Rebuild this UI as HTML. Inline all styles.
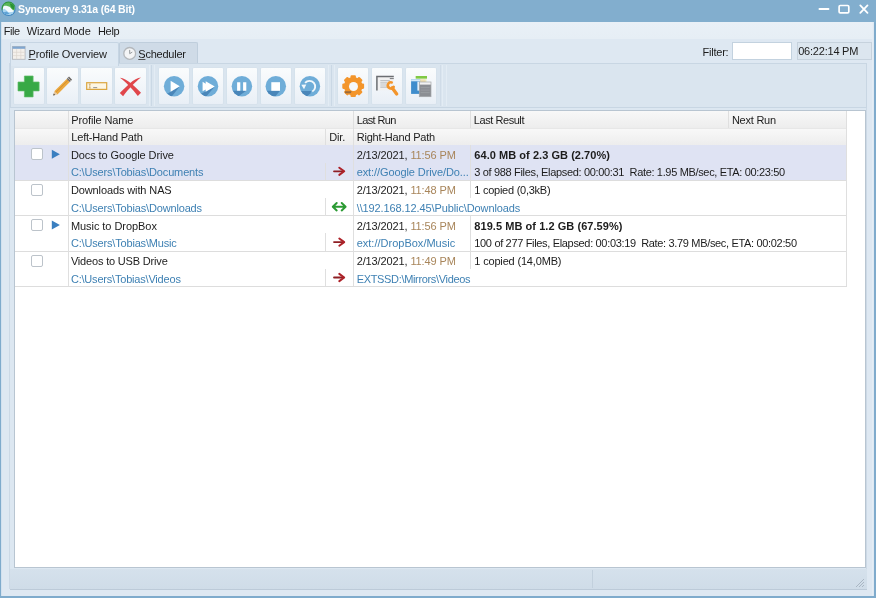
<!DOCTYPE html>
<html><head><meta charset="utf-8"><title>Syncovery 9.31a (64 Bit)</title>
<style>
*{box-sizing:border-box;margin:0;padding:0}
html,body{width:876px;height:598px;overflow:hidden}
body{position:relative;background:#7fabcc;font-family:"Liberation Sans",sans-serif;font-size:11px;color:#1c1c1c}
.abs{position:absolute}
.tx{position:absolute;white-space:pre;line-height:14px;height:14px}
.tx u{text-decoration:underline;text-decoration-thickness:0.9px;text-underline-offset:1.2px;text-decoration-color:#555}
#title{left:0;top:0;width:876px;height:23px;background:#82aece}
#client{left:1.3px;top:21.6px;width:872.3px;height:574px;background:#dee8f2}
#menu{left:1.3px;top:21.7px;width:872.2px;height:17px;background:linear-gradient(#e9f0f7,#e6eef5)}
#tab1{left:9.5px;top:41.7px;width:109.5px;height:24px;background:#dde8f2;border:1px solid #c6d5e3;border-bottom:none;border-radius:2px 2px 0 0}
#tab2{left:119px;top:42.2px;width:78.6px;height:21.5px;background:#cfdbe7;border:1px solid #bfcedc;border-bottom:none;border-radius:2px 2px 0 0}
#page{left:9px;top:63px;width:858px;height:526px;background:#dce7f1;border:1px solid #ccd9e6}
#toolbar{left:10px;top:63.2px;width:856.5px;height:44.4px;background:#dae5ef;border:1px solid #c8d6e3}
.btn{position:absolute;top:67.6px;width:30.5px;height:36.5px;background:linear-gradient(#fafcfd,#e9eff6);box-shadow:0 0 0 0.6px #d3dfea;border-radius:1px}
.btn svg{position:absolute;left:0;top:1px}
#grid{left:13.6px;top:110px;width:852px;height:458px;background:#fff;border:1px solid #b8c5d1}
.hdr{position:absolute;left:14.5px;width:832px;background:linear-gradient(#f8f8f8,#ededed)}
.vl{position:absolute;width:1px;background:#dfdfdf}
.hl{position:absolute;height:1px;background:#dddddd;left:14.5px;width:832px}
.cb{position:absolute;width:12px;height:12px;border:1px solid #bcc3ca;border-radius:2px;background:#fff}
#status{left:9.5px;top:568.6px;width:857px;height:21px;background:linear-gradient(#d5e1ec,#cfdce8);border-bottom:1px solid #bccad8}
#w{position:absolute;left:0;top:0;width:876px;height:598px;will-change:transform;overflow:hidden}
</style></head><body><div id="w">
<div id="title" class="abs">
<svg class="abs" style="left:0px;top:0px" width="17" height="17" viewBox="-0.6 -0.8 17 17"><defs><linearGradient id="ig" x1="0" y1="0" x2="0.3" y2="1"><stop offset="0" stop-color="#2c9436"/><stop offset="0.5" stop-color="#2f9550"/><stop offset="0.62" stop-color="#4a90c4"/><stop offset="1" stop-color="#3f86bf"/></linearGradient><clipPath id="ic"><circle cx="8" cy="8" r="6.2"/></clipPath></defs><circle cx="8" cy="8" r="6.5" fill="#f4fafd" stroke="url(#ig)" stroke-width="1.4"/><g clip-path="url(#ic)"><path d="M3.5 0H16V8.5L12.6 9.7 9 6 5.8 4.9 2.5 5z" fill="#5ab657"/><path d="M9 2.5L14 4 13.5 9 11 7.5z" fill="#2b9434"/><path d="M0 9.5L4 8 8 11.5 13 11 16 9V16H0z" fill="#a9d5f1"/><path d="M2 12L6 10.8 9 13 5 14.5z" fill="#5fa3d6"/></g></svg>
<svg class="abs" style="left:816px;top:2px" width="57" height="15" viewBox="0 0 57 15"><g stroke="#fff" fill="none" stroke-linecap="round"><path d="M3.4 7h9.1" stroke-width="1.8"/><rect x="23.1" y="3.5" width="9.7" height="7.4" rx="1.2" stroke-width="1.7"/><path d="M44.3 3.4l7.2 7.4M51.5 3.4l-7.2 7.4" stroke-width="1.8"/></g></svg>
</div>
<div id="client" class="abs"></div>
<div id="menu" class="abs"></div>
<div id="tab2" class="abs"></div>
<div id="page" class="abs"></div>
<div id="toolbar" class="abs"></div>
<div id="tab1" class="abs"></div>
<!-- tab icons -->
<svg class="abs" style="left:12px;top:46px" width="15" height="15" viewBox="0 0 15 15"><rect x="0.5" y="0.5" width="12.6" height="12.8" fill="#f4f0eb" stroke="#b4b8bd" stroke-width="0.9"/><rect x="0.5" y="0.5" width="12.6" height="2.3" fill="#7fa6d0"/><path d="M0.8 6.3h12M0.8 9.6h12M4.6 3.2v10M8.8 3.2v10" stroke="#ddd6ce" stroke-width="0.7"/></svg>
<svg class="abs" style="left:123px;top:46px" width="15" height="15" viewBox="0 -0.7 15 15"><circle cx="6.7" cy="6.7" r="5.9" fill="#f4f5f6" stroke="#b3b7bb" stroke-width="1.3"/><path d="M6.7 3.2v3.8l2.6-1.6" stroke="#8a8e92" stroke-width="0.9" fill="none"/></svg>
<!-- filter + time -->
<div class="abs" style="left:731.5px;top:42.2px;width:60.3px;height:17.8px;background:#fff;border:1px solid #c3d2df"></div>
<div class="abs" style="left:796.8px;top:42.2px;width:75px;height:18.1px;background:#dce6ef;border:1px solid #c6d2dd"></div>
<!-- toolbar separators -->
<div class="abs" style="left:148.5px;top:65px;width:1px;height:41px;background:#e3ecf4"></div><div class="abs" style="left:151px;top:65px;width:1px;height:41px;background:#cad8e5"></div><div class="abs" style="left:153.6px;top:65px;width:1px;height:41px;background:#e3ecf4"></div>
<div class="abs" style="left:327.5px;top:65px;width:1px;height:41px;background:#e3ecf4"></div><div class="abs" style="left:331.2px;top:65px;width:1px;height:41px;background:#cad8e5"></div><div class="abs" style="left:333.8px;top:65px;width:1px;height:41px;background:#e3ecf4"></div><div class="abs" style="left:439.6px;top:65px;width:1px;height:41px;background:#d0dce8"></div><div class="abs" style="left:442px;top:65px;width:1px;height:41px;background:#e3ecf4"></div><div class="abs" style="left:445.7px;top:65px;width:1px;height:41px;background:#e3ecf4"></div>
<!-- buttons -->
<div class="btn" style="left:13.7px"><svg style="left:-0.7px;top:0.4px" width="32" height="38" viewBox="-0.7 -0.6 32 38"><path d="M10.7 7.4h8.7v6h6v8.9h-6v6h-8.7v-6H4.3v-8.9h6.4z" fill="#38a946" stroke="#5cbb66" stroke-width="0.7" stroke-linejoin="round"/></svg></div>
<div class="btn" style="left:47.3px"><svg style="left:-0.3px;top:0.4px" width="32" height="38" viewBox="-0.3 -0.6 32 38"><path d="M7 22.7L19.4 10.3 22.5 13.4 10.1 25.8z" fill="#eba83f"/><path d="M8.3 24L20.9 11.4" stroke="#d08c2a" stroke-width="0.9"/><path d="M19.4 10.3L21.7 8 24.8 11.1 22.5 13.4z" fill="#6d6a68"/><path d="M20.5 9.2L23.6 12.3" stroke="#bdb7b0" stroke-width="0.9"/><path d="M5.9 26.9L7 22.7 10.1 25.8z" fill="#e7c9a0"/><path d="M5.9 26.9L6.5 25 7.8 26.3z" fill="#3c3c3c"/></svg></div>
<div class="btn" style="left:81.3px"><svg style="left:-0.3px;top:0.4px" width="32" height="38" viewBox="-0.3 -0.6 32 38"><rect x="5.4" y="14.1" width="20" height="6.7" fill="#fdf6e3" stroke="#dba640" stroke-width="1.2"/><path d="M7.5 15.5h2M8.5 15.5v3.9M7.5 19.4h2" stroke="#c29a55" stroke-width="0.7" fill="none"/><path d="M11.9 19h4" stroke="#8a8a8a" stroke-width="0.9"/></svg></div>
<div class="btn" style="left:115.2px"><svg style="left:-0.2px;top:0.4px" width="32" height="38" viewBox="-0.2 -0.6 32 38"><path d="M4.7 9.2C8 9.3 12 11.5 16 15C20 18.5 23.5 22 25.8 24.2L22.6 27.5C20 24 17 20.5 13.5 17C10 13.5 7.5 11 4.7 9.2z" fill="#e0464b"/><path d="M25.8 9C22.5 9.2 18.5 11.5 14.5 15C10.5 18.5 7 22.2 4.6 24.5L7.9 27.7C10.5 24 13.5 20.5 17 17C20.5 13.5 23 11 25.8 9z" fill="#e0464b"/></svg></div>
<!-- blue group -->
<div class="btn" style="left:158.8px"><svg style="left:-0.8px;top:0.4px" width="32" height="38" viewBox="-0.8 -0.6 32 38"><defs><clipPath id="cc"><circle cx="15.3" cy="17.7" r="10.25"/></clipPath></defs><circle cx="15.3" cy="17.7" r="10.25" fill="#6fadd8"/><path clip-path="url(#cc)" d="M21 17.6L11.8 23.2 5 27.3 9 32 13 28z" fill="#4a86b9"/><path d="M11.8 12.2L21 17.6 11.8 23.2z" fill="#fff"/></svg></div>
<div class="btn" style="left:192.7px"><svg style="left:-0.7px;top:0.4px" width="32" height="38" viewBox="-0.7 -0.6 32 38"><circle cx="15.3" cy="17.7" r="10.25" fill="#6fadd8"/><path clip-path="url(#cc)" d="M22.1 17.9L9.9 24.3 5 27 9 32 14 27.5z" fill="#4a86b9"/><path d="M9.9 13.1L13 15.1V12.7L22.1 17.9 13 23.2V20.8L9.9 22.7z" fill="#fff"/></svg></div>
<div class="btn" style="left:226.6px"><svg style="left:-0.6px;top:0.4px" width="32" height="38" viewBox="-0.6 -0.6 32 38"><circle cx="15.3" cy="17.7" r="10.25" fill="#6fadd8"/><path clip-path="url(#cc)" d="M4 22.2H19.7L12.2 27.5 8 30H4z" fill="#4a86b9"/><path d="M10.5 13.6h3.2v8.6h-3.2zM16.5 13.6h3.2v8.6h-3.2z" fill="#fff"/></svg></div>
<div class="btn" style="left:260.6px"><svg style="left:-0.6px;top:0.4px" width="32" height="38" viewBox="-0.6 -0.6 32 38"><circle cx="15.2" cy="17.7" r="10.25" fill="#6fadd8"/><path clip-path="url(#cc)" d="M4 22.2H19.4L15.1 27.5 8 30H4z" fill="#4a86b9"/><rect x="10.7" y="13.6" width="8.7" height="8.6" fill="#fff"/></svg></div>
<div class="btn" style="left:294.7px"><svg style="left:-0.7px;top:0.4px" width="32" height="38" viewBox="-0.7 -0.6 32 38"><circle cx="15.2" cy="17.7" r="10.25" fill="#6fadd8"/><path clip-path="url(#cc)" d="M4 22.5H16.5L15.8 24.6 10 30H4z" fill="#4a86b9"/><path d="M10.4 14.3A5.7 5.7 0 1 1 17.6 22.9" fill="none" stroke="#f2f8fc" stroke-width="1.9"/><path d="M6.6 16.2L11.6 16 9.3 20.6z" fill="#f2f8fc"/></svg></div>
<!-- orange group -->
<div class="btn" style="left:337.8px"><svg style="left:-0.8px;top:0.4px" width="32" height="38" viewBox="-0.8 -0.6 32 38"><g transform="translate(15.4,17.6)"><g fill="#f3952b"><circle r="9.2"/><rect x="-2.7" y="-10.9" width="5.4" height="4" rx="1.1" transform="rotate(0)"/><rect x="-2.7" y="-10.9" width="5.4" height="4" rx="1.1" transform="rotate(45)"/><rect x="-2.7" y="-10.9" width="5.4" height="4" rx="1.1" transform="rotate(90)"/><rect x="-2.7" y="-10.9" width="5.4" height="4" rx="1.1" transform="rotate(135)"/><rect x="-2.7" y="-10.9" width="5.4" height="4" rx="1.1" transform="rotate(180)"/><rect x="-2.7" y="-10.9" width="5.4" height="4" rx="1.1" transform="rotate(225)"/><rect x="-2.7" y="-10.9" width="5.4" height="4" rx="1.1" transform="rotate(270)"/><rect x="-2.7" y="-10.9" width="5.4" height="4" rx="1.1" transform="rotate(315)"/></g><circle cx="0.3" cy="0.3" r="4.5" fill="#f5f8fb"/><path d="M-8.2 5.1H-1.5L-2.5 7H-8.2z" fill="#9a6a3a"/></g></svg></div>
<div class="btn" style="left:371.8px"><svg style="left:-0.8px;top:0.4px" width="32" height="38" viewBox="-0.8 -0.6 32 38"><rect x="5" y="8" width="16.8" height="13.6" fill="#f1f1f1"/><path d="M8.5 12h9.5M8.5 14.3h7M8.5 16.4h7M8.5 18.5h7" stroke="#bfc1c4" stroke-width="1.2"/><path d="M5.1 21.8V8H22" fill="none" stroke="#6b6e72" stroke-width="1.5"/><path d="M18 10h4" stroke="#77797c" stroke-width="1"/><g fill="none" stroke="#f3952b" stroke-linecap="round"><path d="M20.3 19.2L24.9 25.3" stroke-width="3.3"/><path d="M19.9 13.8A3.1 3.1 0 1 0 21.9 18.2" stroke-width="2.6"/></g></svg></div>
<div class="btn" style="left:405.7px"><svg style="left:-0.7px;top:0.4px" width="32" height="38" viewBox="-0.7 -0.6 32 38"><rect x="10" y="7.4" width="11.3" height="7.5" fill="#eef6dc"/><rect x="10" y="7.4" width="11.3" height="2.6" fill="#7fc944"/><path d="M11 11.5h9M11 13.2h9" stroke="#f0c27a" stroke-width="0.7"/><rect x="5.4" y="10.7" width="9" height="14.6" fill="#3f8dcc"/><rect x="5.4" y="10.7" width="9" height="2" fill="#d3e9f8"/><rect x="11.7" y="13" width="3" height="9" fill="#e9f2f9"/><rect x="13.6" y="13.4" width="11.7" height="14.7" fill="#8b8e93"/><rect x="13.6" y="13.4" width="11.7" height="2.6" fill="#f3f3f3"/><rect x="13.6" y="13.4" width="11.7" height="14.7" fill="none" stroke="#a3a6aa" stroke-width="0.7"/><path d="M15 19h9M15 21.5h9M15 24h9" stroke="#9c9fa4" stroke-width="0.8"/></svg></div>

<div id="grid" class="abs"></div>
<div class="hdr abs" style="top:110.8px;height:17.4px"></div>
<div class="hl" style="top:128px;background:#e7e7e7"></div>
<div class="hdr abs" style="top:129px;height:16px"></div>
<div class="hl" style="top:144.5px;background:#cfd6e2"></div>
<div class="abs" style="left:14.5px;top:144.8px;width:831.5px;height:35.4px;background:#dfe3f3"></div>
<div class="hl" style="top:179.7px"></div>
<div class="cb" style="left:30.5px;top:148.4px"></div>
<svg class="abs" style="left:51px;top:148px" width="11" height="12" viewBox="0 -0.8 11 12"><path d="M0.8 1 L8.9 5.5 L0.8 10 Z" fill="#3a7fc0"/></svg>
<div class="vl" style="left:325px;top:162.5px;height:17.7px"></div>
<div class="vl" style="left:470.2px;top:144.8px;height:35.4px"></div>
<svg class="abs" style="left:332px;top:165px" width="15" height="13" viewBox="0 -0.3 15 13"><g fill="none" stroke-linecap="round" stroke-linejoin="round"><path d="M2 6h9.5" stroke="#8e1f24" stroke-width="1.8"/><path d="M7.3 2.4L12.2 6l-4.9 3.6" stroke="#ad2229" stroke-width="2"/></g></svg>
<div class="hl" style="top:215.1px"></div>
<div class="cb" style="left:30.5px;top:183.8px"></div>
<div class="vl" style="left:325px;top:197.9px;height:17.7px"></div>
<div class="vl" style="left:470.2px;top:180.2px;height:17.7px"></div>
<svg class="abs" style="left:331px;top:200px" width="17" height="13" viewBox="0 -0.7 17 13"><g stroke="#2b9a33" stroke-width="2" fill="none" stroke-linecap="round" stroke-linejoin="round"><path d="M2.2 6h12M5.7 2.3L1.8 6l3.9 3.7M10.7 2.3L14.6 6l-3.9 3.7"/></g></svg>
<div class="hl" style="top:250.5px"></div>
<div class="cb" style="left:30.5px;top:219.2px"></div>
<svg class="abs" style="left:51px;top:219px" width="11" height="12" viewBox="0 -0.6 11 12"><path d="M0.8 1 L8.9 5.5 L0.8 10 Z" fill="#3a7fc0"/></svg>
<div class="vl" style="left:325px;top:233.3px;height:17.7px"></div>
<div class="vl" style="left:470.2px;top:215.6px;height:35.4px"></div>
<svg class="abs" style="left:332px;top:236px" width="15" height="13" viewBox="0 -0.1 15 13"><g fill="none" stroke-linecap="round" stroke-linejoin="round"><path d="M2 6h9.5" stroke="#8e1f24" stroke-width="1.8"/><path d="M7.3 2.4L12.2 6l-4.9 3.6" stroke="#ad2229" stroke-width="2"/></g></svg>
<div class="hl" style="top:285.9px"></div>
<div class="cb" style="left:30.5px;top:254.6px"></div>
<div class="vl" style="left:325px;top:268.7px;height:17.7px"></div>
<div class="vl" style="left:470.2px;top:251.0px;height:17.7px"></div>
<svg class="abs" style="left:332px;top:271px" width="15" height="13" viewBox="0 -0.5 15 13"><g fill="none" stroke-linecap="round" stroke-linejoin="round"><path d="M2 6h9.5" stroke="#8e1f24" stroke-width="1.8"/><path d="M7.3 2.4L12.2 6l-4.9 3.6" stroke="#ad2229" stroke-width="2"/></g></svg>
<!-- full vlines -->
<div class="vl" style="left:68px;top:110.8px;height:175.7px"></div>
<div class="vl" style="left:353px;top:110.8px;height:175.7px"></div>
<div class="vl" style="left:325px;top:129px;height:16px"></div>
<div class="vl" style="left:470.2px;top:110.8px;height:17.4px"></div>
<div class="vl" style="left:728px;top:110.8px;height:17.4px"></div>
<div class="vl" style="left:846px;top:110.8px;height:175.7px"></div>
<div id="status" class="abs"></div>
<div class="abs" style="left:592px;top:570px;width:1px;height:18px;background:#c2d0dd"></div>
<svg class="abs" style="left:853px;top:576px" width="13" height="13" viewBox="0 0 13 13"><path d="M11 3L3 11M11 6L6 11M11 9L9 11" stroke="#a9b6c3" stroke-width="1"/></svg>
<!-- window frame edges -->
<div class="abs" style="left:871.6px;top:22px;width:1.8px;height:573.6px;background:#e5edf5;opacity:.8"></div>
<div class="abs" style="left:1.3px;top:21.7px;width:1px;height:574px;background:#c9dced;opacity:.6"></div>
<div class="tx" style="left:18.1px;top:2.4px;letter-spacing:-0.167px;color:#ffffff;font-size:10.5px;font-weight:bold">Syncovery 9.31a (64 Bit)</div>
<div class="tx" style="left:3.7px;top:24.2px;letter-spacing:-0.434px;color:#1c1c1c">File</div>
<div class="tx" style="left:26.7px;top:24.2px;letter-spacing:-0.072px;color:#1c1c1c">Wizard Mode</div>
<div class="tx" style="left:97.9px;top:24.2px;letter-spacing:-0.281px;color:#1c1c1c">Help</div>
<div class="tx" style="left:28.5px;top:46.5px;letter-spacing:-0.111px;color:#1c1c1c"><u>P</u>rofile Overview</div>
<div class="tx" style="left:138.3px;top:46.9px;letter-spacing:-0.227px;color:#1c1c1c"><u>S</u>cheduler</div>
<div class="tx" style="left:702.6px;top:44.6px;letter-spacing:-0.243px;color:#1c1c1c">Filter:</div>
<div class="tx" style="left:798.2px;top:44.2px;letter-spacing:-0.216px;color:#1c1c1c">06:22:14 PM</div>
<div class="tx" style="left:71.3px;top:113.1px;letter-spacing:-0.132px;color:#1c1c1c">Profile Name</div>
<div class="tx" style="left:71.3px;top:130.2px;letter-spacing:-0.193px;color:#1c1c1c">Left-Hand Path</div>
<div class="tx" style="left:356.7px;top:113.1px;letter-spacing:-0.604px;color:#1c1c1c">Last Run</div>
<div class="tx" style="left:329.3px;top:130.2px;letter-spacing:-0.200px;color:#1c1c1c">Dir.</div>
<div class="tx" style="left:356.7px;top:130.2px;letter-spacing:-0.202px;color:#1c1c1c">Right-Hand Path</div>
<div class="tx" style="left:473.8px;top:113.1px;letter-spacing:-0.439px;color:#1c1c1c">Last Result</div>
<div class="tx" style="left:731.9px;top:113.1px;letter-spacing:-0.232px;color:#1c1c1c">Next Run</div>
<div class="tx" style="left:70.9px;top:147.8px;letter-spacing:-0.077px;color:#1c1c1c">Docs to Google Drive</div>
<div class="tx" style="left:70.9px;top:165.4px;letter-spacing:-0.157px;color:#3e80b3">C:\Users\Tobias\Documents</div>
<div class="tx" style="left:356.7px;top:147.8px;letter-spacing:-0.123px;color:#1c1c1c">2/13/2021, <span style='color:#a8855a'>11:56 PM</span></div>
<div class="tx" style="left:356.7px;top:165.4px;letter-spacing:-0.097px;color:#3e80b3">ext://Google Drive/Do...</div>
<div class="tx" style="left:474.3px;top:147.8px;letter-spacing:0.048px;color:#1c1c1c;font-weight:bold">64.0 MB of 2.3 GB (2.70%)</div>
<div class="tx" style="left:474.3px;top:165.4px;letter-spacing:-0.335px;color:#1c1c1c">3 of 988 Files, Elapsed: 00:00:31  Rate: 1.95 MB/sec, ETA: 00:23:50</div>
<div class="tx" style="left:70.9px;top:183.2px;letter-spacing:-0.112px;color:#1c1c1c">Downloads with NAS</div>
<div class="tx" style="left:70.9px;top:200.8px;letter-spacing:-0.165px;color:#3e80b3">C:\Users\Tobias\Downloads</div>
<div class="tx" style="left:356.7px;top:183.2px;letter-spacing:-0.123px;color:#1c1c1c">2/13/2021, <span style='color:#a8855a'>11:48 PM</span></div>
<div class="tx" style="left:356.7px;top:200.8px;letter-spacing:-0.108px;color:#3e80b3">\\192.168.12.45\Public\Downloads</div>
<div class="tx" style="left:474.3px;top:183.2px;letter-spacing:-0.257px;color:#1c1c1c">1 copied (0,3kB)</div>
<div class="tx" style="left:70.9px;top:218.6px;letter-spacing:-0.051px;color:#1c1c1c">Music to DropBox</div>
<div class="tx" style="left:70.9px;top:236.2px;letter-spacing:-0.172px;color:#3e80b3">C:\Users\Tobias\Music</div>
<div class="tx" style="left:356.7px;top:218.6px;letter-spacing:-0.123px;color:#1c1c1c">2/13/2021, <span style='color:#a8855a'>11:56 PM</span></div>
<div class="tx" style="left:356.7px;top:236.2px;letter-spacing:0.004px;color:#3e80b3">ext://DropBox/Music</div>
<div class="tx" style="left:474.3px;top:218.6px;letter-spacing:0.054px;color:#1c1c1c;font-weight:bold">819.5 MB of 1.2 GB (67.59%)</div>
<div class="tx" style="left:474.3px;top:236.2px;letter-spacing:-0.332px;color:#1c1c1c">100 of 277 Files, Elapsed: 00:03:19  Rate: 3.79 MB/sec, ETA: 00:02:50</div>
<div class="tx" style="left:70.9px;top:254.0px;letter-spacing:-0.178px;color:#1c1c1c">Videos to USB Drive</div>
<div class="tx" style="left:70.9px;top:271.6px;letter-spacing:-0.197px;color:#3e80b3">C:\Users\Tobias\Videos</div>
<div class="tx" style="left:356.7px;top:254.0px;letter-spacing:-0.123px;color:#1c1c1c">2/13/2021, <span style='color:#a8855a'>11:49 PM</span></div>
<div class="tx" style="left:356.7px;top:271.6px;letter-spacing:-0.333px;color:#3e80b3">EXTSSD:\Mirrors\Videos</div>
<div class="tx" style="left:474.3px;top:254.0px;letter-spacing:-0.170px;color:#1c1c1c">1 copied (14,0MB)</div>
</div></body></html>
